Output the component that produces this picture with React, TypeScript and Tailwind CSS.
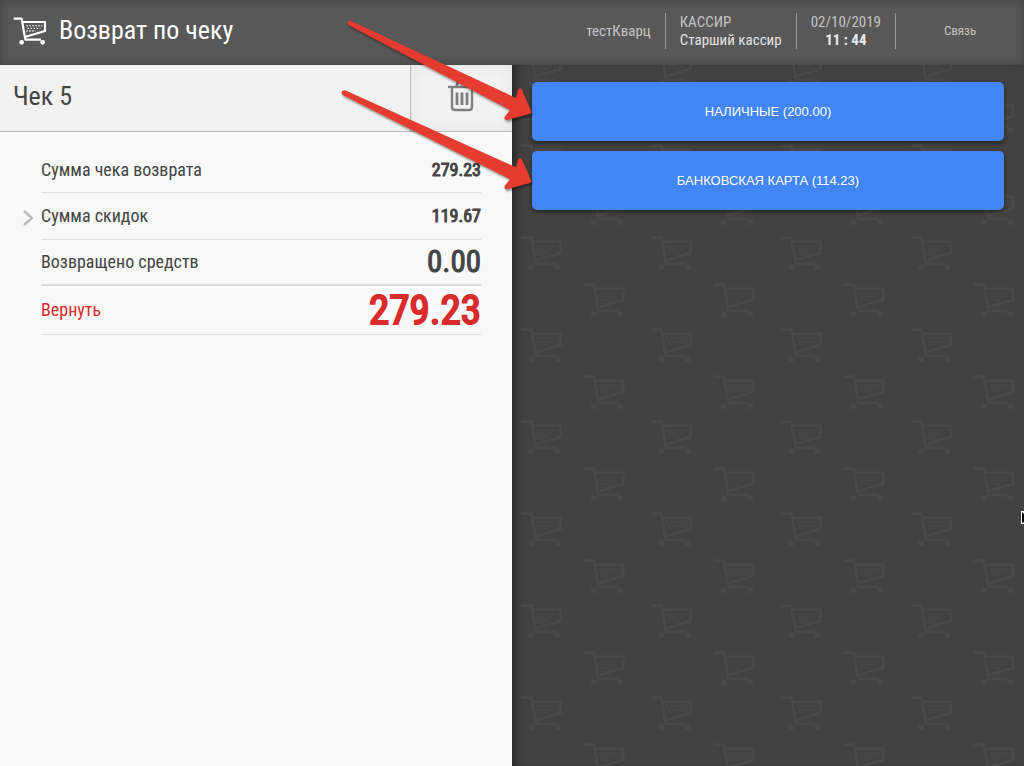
import { useState } from 'react';
import clsx from 'clsx';

type SumRow = {
  label: string;
  value: string;
  className: string;
  valueClassName: string;
  expandable?: boolean;
};

const rows: SumRow[] = [
  {
    label: 'Сумма чека возврата',
    value: '279.23',
    className: 'h-[46px] border-b',
    valueClassName: 'text-lg [-webkit-text-stroke:1px_currentColor]'
  },
  {
    label: 'Сумма скидок',
    value: '119.67',
    className: 'h-[47px] border-b',
    valueClassName: 'text-lg [-webkit-text-stroke:1px_currentColor]',
    expandable: true
  },
  {
    label: 'Возвращено средств',
    value: '0.00',
    className: 'h-[46px] border-b-2',
    valueClassName: 'pb-0.5 text-[31px] [-webkit-text-stroke:1px_currentColor]'
  },
  {
    label: 'Вернуть',
    value: '279.23',
    className: 'h-[49px] border-b text-[#d92b2b]',
    valueClassName: 'text-[41px] [-webkit-text-stroke:2px_currentColor]'
  }
];

const payments = ['НАЛИЧНЫЕ (200.00)', 'БАНКОВСКАЯ КАРТА (114.23)'];

const CartShape = () => (
  <g fill="none" stroke="currentColor" strokeWidth="6.5">
    <path d="M2 5H26L37 68H84" strokeLinejoin="round" />
    <path d="M29 15H96V42L35 60" strokeLinejoin="round" />
    <path d="M40 26H88M44 34H82M40 42H68" strokeWidth="4" strokeDasharray="4 5" />
    <circle cx="26" cy="76" r="7" fill="currentColor" stroke="none" />
    <circle cx="89" cy="76" r="7" fill="currentColor" stroke="none" />
  </g>
);

const CartBackdrop = () => (
  <svg className="absolute inset-0 h-full w-full text-[#494949]" aria-hidden="true">
    <defs>
      <pattern id="carts" x="0" y="75" width="130" height="92" patternUnits="userSpaceOnUse">
        <g transform="translate(8.500 3.500) scale(0.417)">
          <CartShape />
        </g>
        <g transform="translate(71 50.500) scale(0.417)">
          <CartShape />
        </g>
      </pattern>
    </defs>
    <rect width="100%" height="100%" fill="url(#carts)" />
  </svg>
);

const TrashIcon = () => (
  <svg className="h-8 w-7" viewBox="0 0 28 32" fill="none" stroke="#808080" strokeWidth="2.400" aria-hidden="true">
    <path d="M0 7H27" />
    <path d="M8 7L10 2H17L19 7" />
    <path d="M4 7V27Q4 30 7 30H21Q24 30 24 27V7" />
    <path d="M9 12.500V25M14 12.500V25M19 12.500V25" strokeWidth="2.800" />
  </svg>
);

const Arrows = () => (
  <svg
    className="pointer-events-none absolute top-[10px] right-[calc(50%-38px)] h-[190px] w-[220px] drop-shadow-[1px_2px_1px_rgba(0,0,0,0.4)]"
    viewBox="0 0 660 570"
    fill="#e63c2f"
    aria-hidden="true">
    <path d="M62 32L558 264L564 240Q569 230 576 239L604 304Q606 308 600 311L532 330Q521 330 524 320L540 300L56 46Q47 34 62 32Z" />
    <path d="M45 241L558 472L564 449Q569 439 576 448L604 512Q606 516 600 519L532 538Q521 538 524 528L540 508L38 255Q29 243 45 241Z" />
  </svg>
);

const App = () => {
  const [opened, setOpened] = useState(false);

  return (
    <div className="relative flex min-h-screen flex-col overflow-hidden font-['Roboto_Condensed','Liberation_Sans_Narrow',Roboto,sans-serif] text-[#444]">
      <header className="flex h-[65px] items-center bg-[#585858] pb-1 pl-[13px] text-white shadow-[inset_0_0_10px_rgba(0,0,0,0.3)]">
        <svg className="h-7 w-[34px]" viewBox="0 0 102 84" aria-hidden="true">
          <CartShape />
        </svg>
        <h1 className="ml-3 text-[26px]">Возврат по чеку</h1>
        <div className="ml-auto flex h-9 items-center text-[15px] leading-[18px] text-[#c4c4c4]">
          <span className="pr-3.5">тестКварц</span>
          <div className="h-9 border-l border-[#999] px-3.5">
            <div>КАССИР</div>
            <div className="text-[#e4e4e4]">Старший кассир</div>
          </div>
          <div className="h-9 border-x border-[#999] px-3.5 text-center">
            <div>02/10/2019</div>
            <div className="font-bold text-[#e8e8e8]">11 : 44</div>
          </div>
          <span className="w-32 text-center text-[13px]">Связь</span>
        </div>
      </header>

      <main className="grid flex-1 grid-cols-2">
        <section className="bg-[#f9f9f9]">
          <div className="flex h-[67px] border-b border-[#bbb] bg-[#f2f2f2]">
            <h2 className="flex flex-1 items-center pb-1 pl-[13px] text-[26px]">Чек 5</h2>
            <button
              type="button"
              aria-label="Удалить"
              className="flex w-[102px] items-center justify-center border-l border-[#bbb] pb-1 shadow-[inset_0_0_16px_rgba(0,0,0,0.06)]">
              <TrashIcon />
            </button>
          </div>
          <dl className="pt-[15px] pr-[31px] pl-[41px]">
            {rows.map((row) => (
              <div
                key={row.label}
                className={clsx('relative flex items-center justify-between border-[#ddd]', row.className)}>
                {row.expandable && (
                  <button
                    type="button"
                    aria-label="Показать скидки"
                    aria-expanded={opened}
                    onClick={() => setOpened(!opened)}
                    className="absolute -left-5 top-1/2 -translate-y-1/2">
                    <svg className="h-5 w-3" viewBox="0 0 12 20" fill="none" stroke="#bbb" strokeWidth="2.500">
                      <path d="M3 5L11 12L3 19" />
                    </svg>
                  </button>
                )}
                <dt className="text-lg">{row.label}</dt>
                <dd className={clsx('leading-none', row.valueClassName)}>{row.value}</dd>
              </div>
            ))}
          </dl>
        </section>

        <section className="relative bg-[#424242] shadow-[inset_8px_0_8px_-4px_rgba(0,0,0,0.4)]">
          <CartBackdrop />
          <div className="relative flex flex-col gap-[10px] px-5 pt-[17px]">
            {payments.map((payment) => (
              <button
                key={payment}
                type="button"
                className="h-[59px] rounded-[5px] bg-[#4285f4] font-['Liberation_Sans',Arial,sans-serif] text-[13px] text-white shadow-[0_2px_4px_rgba(0,0,0,0.5)]">
                {payment}
              </button>
            ))}
          </div>
        </section>
      </main>

      <Arrows />
      <svg className="absolute top-[511px] right-0 h-[13px] w-[3px]" viewBox="0 0 3 13" aria-hidden="true">
        <path d="M0 0H3V13H0Z" fill="#fff" />
        <path d="M1 1L3 3V11L1 12Z" fill="#000" />
      </svg>
    </div>
  );
};

export default App;
